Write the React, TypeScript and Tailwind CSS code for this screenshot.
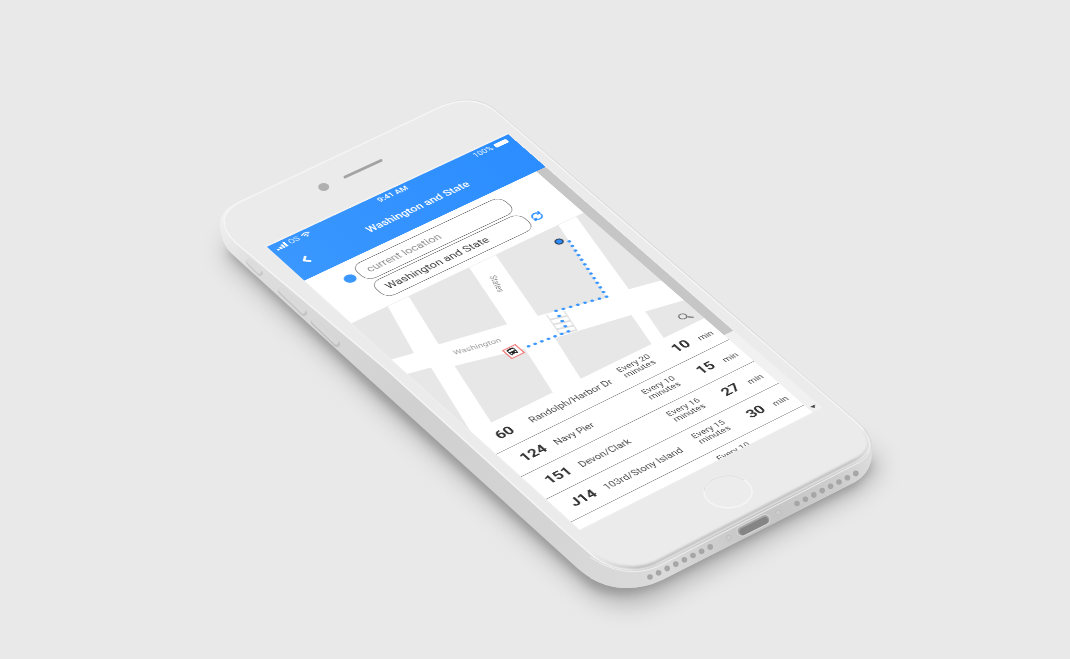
import { useState } from 'react';
import { RefreshCw } from 'lucide-react';
import { MdDirectionsBus, MdWifi } from 'react-icons/md';

type Departure = {
  route: string;
  name: string;
  every: string;
  wait: string;
};

const departures: Departure[] = [
  { route: '60', name: 'Randolph/Harbor Dr', every: '20', wait: '10' },
  { route: '124', name: 'Navy Pier', every: '10', wait: '15' },
  { route: '151', name: 'Devon/Clark', every: '16', wait: '27' },
  { route: 'J14', name: '103rd/Stony Island', every: '15', wait: '30' },
  { route: '', name: '', every: '10', wait: '' },
];

const blocks = [
  '0,0 56,0 30,93 0,86',
  '88,0 181,0 155,118 64,98',
  '222,0 320,0 285,152 195,128',
  '348,0 360,0 360,166 317,155',
  '0,120 31,128 0,254',
  '56,143 145,169 124,257 30,257',
  '187,175 290,197 277,257 167,257',
  '308,202 360,214 360,257 296,257',
];

/** Evenly spaced dots between two points, leaving out the last one. */
function dotsBetween(x1: number, y1: number, x2: number, y2: number, count: number) {
  return Array.from({ length: count }, (_, i) => [
    x1 + ((x2 - x1) * i) / count,
    y1 + ((y2 - y1) * i) / count,
  ]);
}

const walk = [
  ...dotsBetween(312, 35, 286, 150, 12),
  ...dotsBetween(286, 150, 219, 134, 7),
  ...dotsBetween(219, 134, 208, 175, 4),
  ...dotsBetween(208, 175, 142, 167, 7),
];

function PhoneBody() {
  const leftHoles = Array.from({ length: 8 }, (_, i) => [650 + i * 8.6, 577 - i * 4.3]);
  const rightHoles = Array.from({ length: 8 }, (_, i) => [797 + i * 8.4, 503.5 - i * 4.3]);
  return (
    <svg viewBox="0 0 1070 659" className="absolute inset-0 size-full" aria-hidden="true">
      <defs>
        <linearGradient id="side" gradientUnits="userSpaceOnUse" x1="220" y1="220" x2="610" y2="590">
          <stop offset="0" stopColor="#f0f0f0" />
          <stop offset="0.1" stopColor="#dedede" />
          <stop offset="0.5" stopColor="#d0d0d0" />
          <stop offset="0.85" stopColor="#d4d4d4" />
          <stop offset="1" stopColor="#dadada" />
        </linearGradient>
        <linearGradient id="base" gradientUnits="userSpaceOnUse" x1="600" y1="570" x2="872" y2="450">
          <stop offset="0" stopColor="#d8d8d8" />
          <stop offset="0.2" stopColor="#dadada" />
          <stop offset="0.55" stopColor="#c4c4c4" />
          <stop offset="0.85" stopColor="#cdcdcd" />
          <stop offset="1" stopColor="#dedede" />
        </linearGradient>
        <linearGradient id="rim" gradientUnits="userSpaceOnUse" x1="592" y1="556" x2="872" y2="430">
          <stop offset="0" stopColor="#bdbdbd" stopOpacity="0" />
          <stop offset="0.12" stopColor="#bdbdbd" />
          <stop offset="0.9" stopColor="#bdbdbd" />
          <stop offset="1" stopColor="#bdbdbd" stopOpacity="0" />
        </linearGradient>
        <filter id="soft" x="-20%" y="-20%" width="140%" height="140%">
          <feGaussianBlur stdDeviation="11" />
        </filter>
        <filter id="tight" x="-20%" y="-20%" width="140%" height="140%">
          <feGaussianBlur stdDeviation="5" />
        </filter>
        <filter id="hair" x="-20%" y="-20%" width="140%" height="140%">
          <feGaussianBlur stdDeviation="0.8" />
        </filter>
      </defs>

      <path
        d="M232 232 L262 250 L850 440 L882 462 Q876 482 856 494 L672 592 Q622 622 582 588 L376 402 L224 258Z"
        fill="#8a8a8a"
        opacity="0.5"
        filter="url(#soft)"
      />
      <path
        d="M240 240 L850 440 L872 466 L856 486 L664 583 Q620 604 590 586 L374 392 L228 252Z"
        fill="#777"
        opacity="0.5"
        filter="url(#tight)"
      />

      <path
        d="M220 226 Q219 211 236 203 L440 106 Q476 90 500 113 L858 422 Q874 436 872 450 Q873 471 855 482 L662 580 Q643 589 623 588 Q598 587 576 567 L370 380 L232 254 Q221 244 220 226Z"
        fill="url(#side)"
      />
      <path
        d="M600 566 Q630 578 656 564 L862 460 Q873 450 872 446 Q874 471 855 482 L662 580 Q643 589 623 588 Q606 587 590 578Z"
        fill="url(#base)"
      />
      <path
        d="M224 220 Q226 208 244 200 L440 107 Q475 92 499 114 L857 423 Q882 446 858 460 L656 564 Q624 578 594 557 L562 529 L388 371 L236 243 Q224 232 224 220Z"
        fill="#ebebeb"
        stroke="#f5f5f5"
        strokeWidth="1.5"
      />
      <path
        d="M864 430 Q876 448 857 459 L655 563 Q624 576 592 554"
        fill="none"
        stroke="url(#rim)"
        strokeWidth="3"
        filter="url(#hair)"
      />
      <path d="M868 438 Q875 453 860 462 L657 567 Q624 580 590 557" fill="none" stroke="#efefef" strokeWidth="1" />

      <g strokeLinecap="round" fill="none">
        <path d="M249 262 L260 273" stroke="#c8c8c8" strokeWidth="6" />
        <path d="M249 261 L259 271" stroke="#dcdcdc" strokeWidth="5" />
        <path d="M281 291 L304 313" stroke="#c4c4c4" strokeWidth="6" />
        <path d="M281 290 L303 311" stroke="#dadada" strokeWidth="5" />
        <path d="M314 322 L337 344" stroke="#c0c0c0" strokeWidth="6" />
        <path d="M314 321 L336 342" stroke="#d8d8d8" strokeWidth="5" />
      </g>

      <ellipse cx="323.7" cy="187" rx="5.5" ry="4" fill="#b0b0b0" />
      <path d="M345 177 L381 160.500" stroke="#a3a3a3" strokeWidth="3" strokeLinecap="round" />

      <ellipse cx="728" cy="491.700" rx="24" ry="16" fill="#ececec" stroke="#f6f6f6" strokeWidth="1.500" />
      <path d="M704 491 A24 16 0 0 1 744 480" fill="none" stroke="#dcdcdc" />

      {[...leftHoles, ...rightHoles].map(([cx, cy]) => (
        <circle key={cx} cx={cx} cy={cy} r="2.8" fill="#a6a6a6" />
      ))}
      <path d="M742 531 L765 519.500" stroke="#d8d8d8" strokeWidth="11" strokeLinecap="round" />
      <path d="M742 531 L765 519.500" stroke="#a8a8a8" strokeWidth="9" strokeLinecap="round" />
      <path d="M743 531.500 L765 520.500" stroke="#858585" strokeWidth="7" strokeLinecap="round" />
      <circle cx="729" cy="537.700" r="2.6" fill="#cdcdcd" stroke="#b6b6b6" strokeWidth="0.6" />
      <circle cx="778.300" cy="512.700" r="2.6" fill="#cdcdcd" stroke="#b6b6b6" strokeWidth="0.6" />
    </svg>
  );
}

/** Thin highlight where the glass meets the bezel. */
function BezelEdge() {
  return (
    <svg
      viewBox="0 0 1070 659"
      className="pointer-events-none absolute inset-0 size-full"
      fill="none"
      stroke="#ededed"
      strokeWidth="1.5"
      aria-hidden="true"
    >
      <path d="M579.500 530.500 L265.500 246.500" />
      <path d="M265.500 246.500 L508 133.500" stroke="#f3f3f3" />
      <path d="M508.500 133.500 L823 408 L580 530.500" />
    </svg>
  );
}

function Header() {
  return (
    <header className="relative z-10 h-[82px] shrink-0 bg-linear-to-r from-[#3a97ff] to-[#2b8dff] text-white">
      <div className="grid h-5 grid-cols-3 items-center px-2 text-xs">
        <span className="flex items-center gap-1">
          <svg viewBox="0 0 16 10" className="h-2.5 w-4" fill="currentColor" aria-hidden="true">
            <rect x="0" y="7" width="3" height="3" rx="0.5" />
            <rect x="4.300" y="5" width="3" height="5" rx="0.5" />
            <rect x="8.600" y="2.500" width="3" height="7.500" rx="0.5" />
            <rect x="13" y="0" width="3" height="10" rx="0.5" />
          </svg>
          <span className="opacity-80">OS</span>
          <MdWifi className="size-3.5" />
        </span>
        <span className="text-center font-medium">9:41 AM</span>
        <span className="flex items-center justify-end gap-1">
          <span className="opacity-90">100%</span>
          <span className="h-2 w-5 rounded-xs bg-white" />
        </span>
      </div>
      <div className="grid h-15 grid-cols-[40px_1fr_18px] items-center">
        <button type="button" aria-label="Back" className="flex h-10 items-center justify-center pl-3">
          <svg viewBox="0 0 10 14" className="h-4 w-3" fill="none" stroke="currentColor" strokeWidth="2.8">
            <path d="M8 1.500 L2.500 7 L8 12.500" />
          </svg>
        </button>
        <h1 className="text-center text-[16px] font-medium">Washington and State</h1>
      </div>
    </header>
  );
}

function TripForm() {
  const [from, setFrom] = useState('');
  const [to, setTo] = useState('Washington and State');
  const field =
    'h-[37px] w-[231px] rounded-[14px] border border-[#6b6b6b] bg-white px-3 text-[16px] text-[#3d3d3d] outline-none placeholder:text-[#8f8f8f]';
  return (
    <form className="flex h-[102px] shrink-0 gap-[6px] bg-white pt-3 pl-[41px]">
      <span className="mt-[11px] size-4 rounded-full bg-[#3a97ff]" />
      <div className="flex flex-col gap-1">
        <input
          aria-label="From"
          placeholder="current location"
          value={from}
          onChange={(e) => setFrom(e.target.value)}
          className={field}
        />
        <input aria-label="To" value={to} onChange={(e) => setTo(e.target.value)} className={field} />
      </div>
      <button type="button" aria-label="Swap" className="mt-[50px] h-5 text-[#2f8fff]">
        <RefreshCw className="size-[17px]" strokeWidth={3} />
      </button>
    </form>
  );
}

function StreetMap() {
  return (
    <svg viewBox="0 0 360 257" className="h-[257px] w-[360px] shrink-0" role="img" aria-label="Map">
      <rect width="360" height="257" fill="#fff" />
      {blocks.map((points) => (
        <polygon key={points} points={points} fill="#e7e7e7" />
      ))}
      <path d="M0 0.500 H360" stroke="#ededed" />
      <g stroke="#dedede" strokeWidth="1.5">
        <path d="M205 133 L196 175 M227 140 L218 179" />
        <path d="M203 143 L224 150 M201 153 L222 160 M199 163 L220 170 M196 173 L218 179" strokeWidth="3" />
      </g>
      <text
        transform="translate(190 47) rotate(106)"
        textAnchor="middle"
        dominantBaseline="central"
        fontSize="12"
        fill="#8c8c8c"
      >
        States
      </text>
      <text
        transform="translate(100 130) rotate(13)"
        textAnchor="middle"
        dominantBaseline="central"
        fontSize="12"
        fill="#999"
      >
        Washington
      </text>
      {walk.map(([cx, cy]) => (
        <circle key={`${cx}-${cy}`} cx={cx} cy={cy} r="2.4" fill="#3a97ff" />
      ))}
      <circle cx="301.500" cy="27.500" r="5" fill="#2b8dff" stroke="#333d4d" strokeWidth="2" />
      <g transform="translate(130.500 165)">
        <rect x="-9.500" y="-9.500" width="19" height="19" fill="#fff" stroke="#f46a6a" strokeWidth="1.6" />
        <MdDirectionsBus x="-9" y="-9" width="18" height="18" color="#222" />
      </g>
      <g fill="none" stroke="#666" strokeWidth="1.5">
        <circle cx="340" cy="238" r="5" />
        <path d="M344 242 L350 247.500" strokeWidth="2" />
      </g>
    </svg>
  );
}

function DepartureList() {
  return (
    <ul className="text-[#4d4d4d]">
      {departures.map((d) => (
        <li
          key={d.route}
          className="grid h-[52px] grid-cols-[50px_134px_66px_68px_40px] items-center border-b border-[#8f8f8f] pt-px pl-5 whitespace-nowrap"
        >
          <span className="text-[21px] font-bold text-[#333]">{d.route}</span>
          <span className="text-[14px]">{d.name}</span>
          <span className="pb-2 text-center text-[13px] leading-[13px]">
            Every {d.every}
            <br />
            minutes
          </span>
          <span className="text-center text-[21px] font-bold text-[#333]">{d.wait}</span>
          <span className="-ml-2 pt-1 text-[13px]">{d.wait && 'min'}</span>
        </li>
      ))}
    </ul>
  );
}

function Scrollbar() {
  return (
    <div className="flex w-[15px] shrink-0 flex-col justify-between bg-[#f1f1f1]" aria-hidden="true">
      <div className="h-[400px] bg-[#c6c6c6]" />
      <svg viewBox="0 0 15 17" className="h-[17px] w-[15px]">
        <path d="M3.500 6 H11.500 L7.500 11Z" fill="#4a4a4a" />
      </svg>
    </div>
  );
}

export default function App() {
  return (
    <main className="flex min-h-screen items-center justify-center overflow-hidden bg-[#e9e9e9] font-[Roboto,'Liberation_Sans',sans-serif]">
      <div className="relative h-[659px] w-[1070px] shrink-0">
        <PhoneBody />
        <div className="absolute top-0 left-0 flex h-[667px] w-[375px] origin-top-left [transform:matrix3d(0.67275,-0.29411,0,0.00005397,0.44615,0.4018,0,-0.00004244,0,0,1,0,266,247,0,1)] flex-col overflow-hidden bg-white will-change-transform">
          <Header />
          <div className="flex min-h-0 flex-1">
            <div className="flex min-w-0 flex-1 flex-col">
              <TripForm />
              <StreetMap />
              <DepartureList />
            </div>
            <Scrollbar />
          </div>
        </div>
        <BezelEdge />
      </div>
    </main>
  );
}
